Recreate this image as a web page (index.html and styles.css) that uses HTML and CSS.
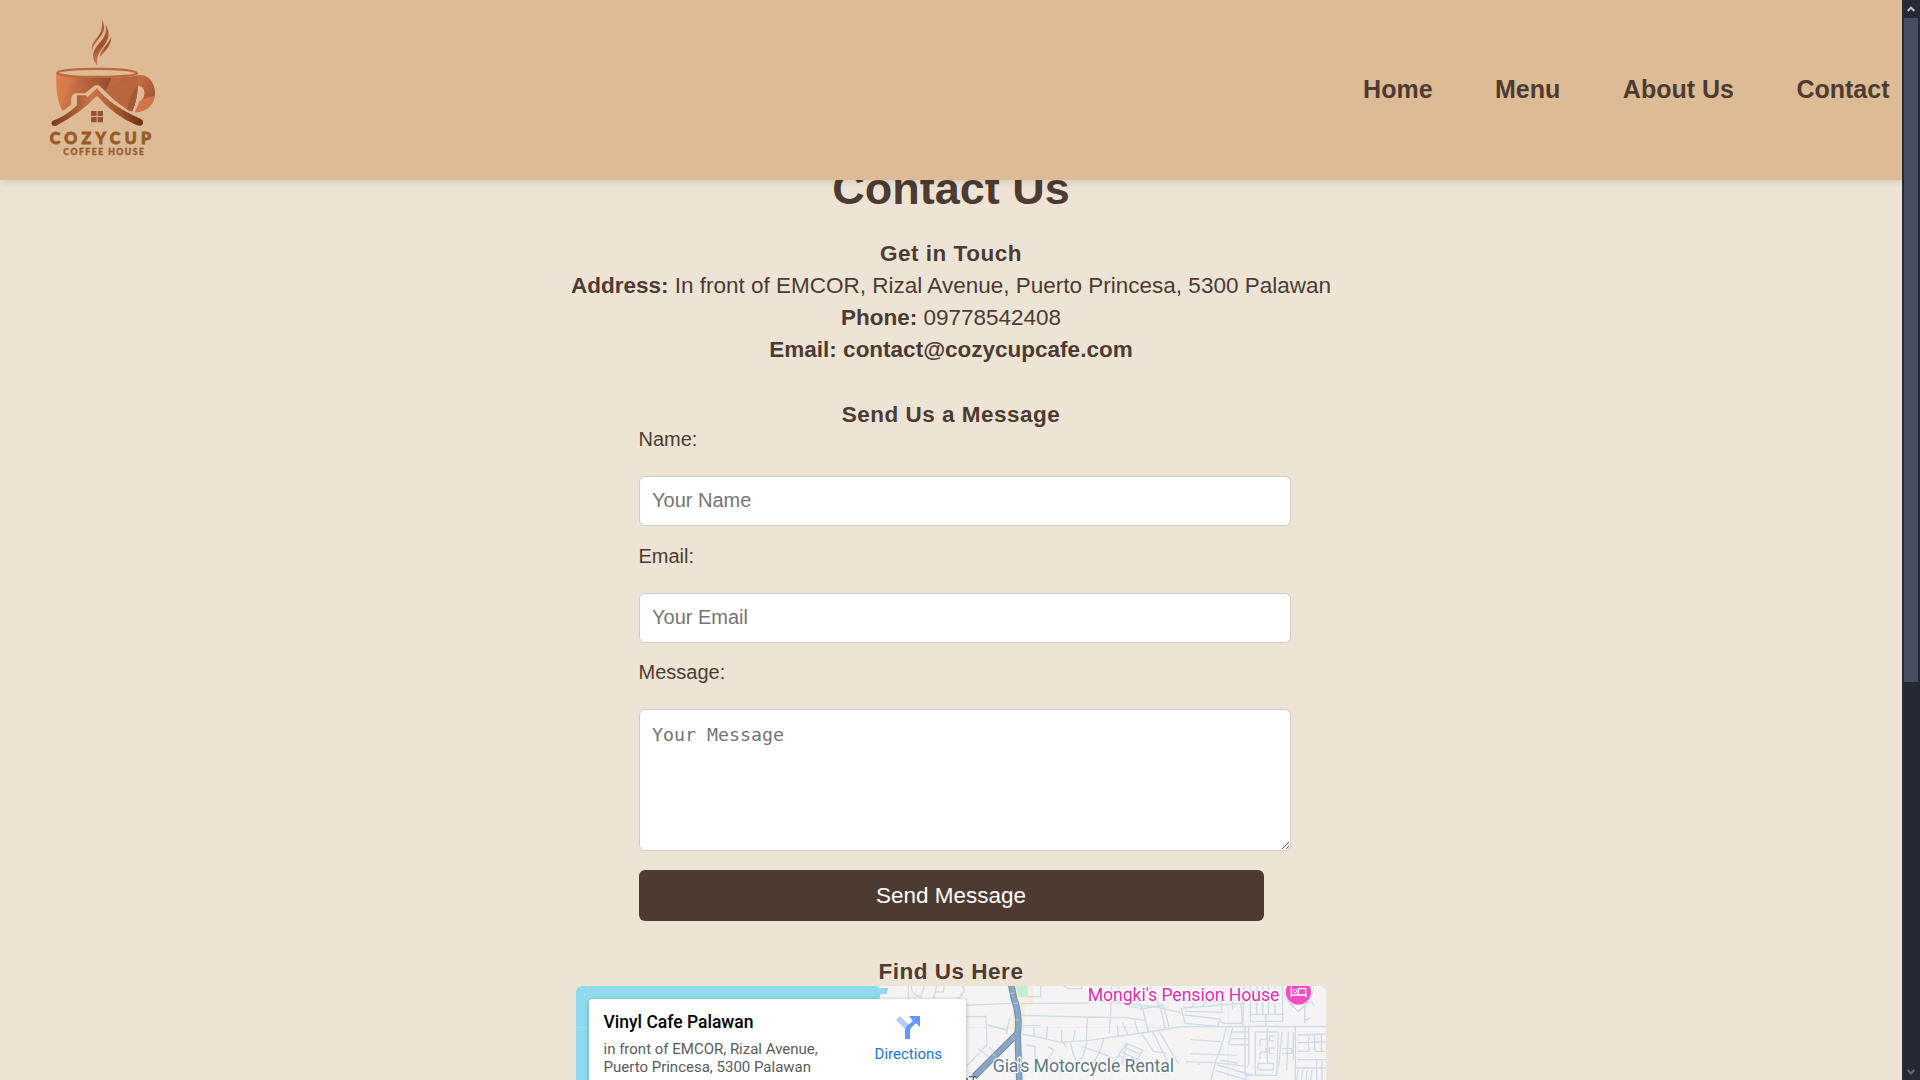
FILE: index.html
```html
<!DOCTYPE html>
<html lang="en">
<head>
<meta charset="utf-8">
<title>Cozy Cup - Contact Us</title>
<link rel="stylesheet" href="styles.css">
</head>
<body>
<div class="window">
  <div class="page">
    <header class="header">
      <svg class="logo" width="150" height="160" viewBox="0 0 450 480" role="img" aria-label="Cozycup Coffee House">
        <defs>
          <linearGradient id="steam" x1="0" y1="0" x2="0" y2="1">
            <stop offset="0" stop-color="#b9673e"/><stop offset=".5" stop-color="#9c5230"/><stop offset="1" stop-color="#cf7a4c"/>
          </linearGradient>
          <linearGradient id="left" x1="0" y1="0" x2="1" y2=".5">
            <stop offset="0" stop-color="#dc814f"/><stop offset=".5" stop-color="#d87b4a"/><stop offset="1" stop-color="#a9603c"/>
          </linearGradient>
          <linearGradient id="band" x1="0" y1=".2" x2="1" y2="0">
            <stop offset="0" stop-color="#d0744a"/><stop offset="1" stop-color="#8b4a2b"/>
          </linearGradient>
          <linearGradient id="handle" x1="0" y1="0" x2="1" y2="1">
            <stop offset="0" stop-color="#cc7144"/><stop offset="1" stop-color="#95502f"/>
          </linearGradient>
          <linearGradient id="roof" x1="0" y1="0" x2="1" y2="0">
            <stop offset="0" stop-color="#78391b"/><stop offset=".45" stop-color="#cc7447"/><stop offset=".7" stop-color="#a5572f"/><stop offset="1" stop-color="#6c3214"/>
          </linearGradient>
          <clipPath id="bowl"><path d="M79 187 C83 205 313 207 323 194 C325 235 321 272 307 304 H99 C82 280 77 238 79 187Z"/></clipPath>
        </defs>
        <g fill="url(#steam)">
          <path d="M215 27 C231 58 217 71 205 88 C194 103 186 113 187 125 C178 98 206 86 213 64 C217 51 217 39 215 27Z"/>
          <path d="M226 42 C243 69 236 88 222 107 C206 129 197 141 203 168 C182 145 187 124 204 104 C221 84 232 70 226 42Z"/>
          <path d="M244 77 C237 103 211 117 208 142 C223 126 245 108 244 77Z"/>
        </g>
        <path fill="url(#handle)" d="M323 196 C352 190 374 216 375 246 C376 282 348 306 315 307 C322 296 326 287 327 277 C340 270 344 256 343 245 C342 234 335 228 324 227Z"/>
        <path fill="#d0744a" d="M374 259 C354 259 336 268 326 278 L315 307 C347 306 370 289 374 259Z"/>
        <g clip-path="url(#bowl)">
          <path fill="url(#left)" d="M70 180H160V310H70Z"/>
          <path fill="url(#band)" d="M145 195 Q142 232 111 292 L145 310 H230 V260 Q264 224 247 195Z"/>
          <path fill="url(#handle)" d="M247 195 Q237 231 215 260 L270 310 H330 V195Z"/>
          <path fill="#b9673e" d="M330 197 Q267 215 239 256 L289 310 H330Z"/>
          <path fill="#a2583a" d="M324 225 Q296 258 289 310 H330Z"/>
        </g>
        <path fill="none" stroke="#bb673c" stroke-width="7" d="M82 188 C84 174 313 171 321 190 C316 203 87 207 82 188Z"/>
        <path fill="none" stroke="#ddbb95" stroke-width="31" stroke-linejoin="round" d="M69 337 Q104 321 139 292 V265 H171 L201 241 L238 278 Q279 313 338 343"/>
        <path fill="#ddbb95" d="M201 258 L116 330 V350 H300Z"/>
        <path fill="url(#roof)" d="M67 333 Q109 318 141 286 V256 H167 L173 261 L201 235 Q244 289 333 327 Q343 334 337 344 Q331 350 319 345 Q251 316 201 257 Q151 310 78 347 Q66 350 64 340Z"/>
        <path fill="#955330" d="M183 303H200V318H183ZM203 303H219V318H203ZM183 321H200V337H183ZM203 321H219V337H203Z"/>
        <text class="logo-name" x="59" y="401" textLength="304">COZYCUP</text>
        <text class="logo-tag" x="100" y="436" textLength="242">COFFEE HOUSE</text>
      </svg>
      <nav class="nav">
        <a>Home</a><a>Menu</a><a>About Us</a><a>Contact</a>
      </nav>
    </header>

    <main class="main">
      <h1 class="title">Contact Us</h1>
      <section class="touch">
        <h2 class="heading">Get in Touch</h2>
        <div class="details">
          <p><b>Address:</b> In front of EMCOR, Rizal Avenue, Puerto Princesa, 5300 Palawan</p>
          <p><b>Phone:</b> 09778542408</p>
          <p><b>Email: contact@cozycupcafe.com</b></p>
        </div>
      </section>
      <section class="message">
        <h2 class="heading">Send Us a Message</h2>
        <form class="form">
          <label for="name">Name:</label>
          <input id="name" type="text" placeholder="Your Name">
          <label for="email">Email:</label>
          <input id="email" type="email" placeholder="Your Email">
          <label for="msg">Message:</label>
          <textarea id="msg" placeholder="Your Message"></textarea>
          <button type="button">Send Message</button>
        </form>
      </section>
      <section class="find">
        <h2 class="heading">Find Us Here</h2>
        <div class="map">
          <svg class="map-canvas" width="750" height="94" viewBox="0 0 750 94">
            <g transform="translate(-6 -26) scale(.33333)">
              <path fill="#90daee" d="M0 78H922L928 84H955L950 102H932L927 120H0Z"/><path fill="#90daee" d="M0 100H80V360H0Z"/>
              <path stroke="#a6e2f1" stroke-width="2" d="M55 78V360M0 202H60"/>
              <g fill="none" stroke="#cfdce7" stroke-width="4"><path d="M1015 78V120M1025 78Q1020 100 1050 110M1063 78L1050 118M1100 78L1090 118M1095 96H1120L1122 78M1180 78Q1190 100 1160 118"/></g>
            </g>
            <g transform="translate(384 -26) scale(.33333)">
              <path fill="#f6edda" d="M140 78H222V128H195L192 215H154L158 130Z"/>
              <path fill="#c3edd4" d="M169 78H203V111H176Z"/>
              <path fill="none" stroke="#e5e5e9" stroke-width="2" d="M0 202H1100M805 78V360"/>
              <g fill="none" stroke="#cfdce7" stroke-width="4">
                <path d="M0 106Q20 94 7 78M12 136L154 130M184 131L380 129L405 120L595 142L662 158M203 110H242V78M310 78L325 86H365V78M455 78V103L448 220M477 78L468 108M503 98L500 138L548 146L530 118M548 146L565 216M540 148L610 135L628 205M570 78L603 150L616 208M186 166L380 171L500 173L555 182M382 170L379 242M18 170L78 169L81 254L15 323M83 195L140 210M150 173L139 222M87 261L106 280M55 265L85 290M187 197H242M186 222L225 229L300 247L382 242L565 216L665 200L1100 199M222 203V229M262 199L259 238M305 210V247M345 210L340 243M472 195L475 228M488 187L503 224M524 181L535 220M198 255L225 260V290M265 261Q290 270 272 286L247 322M318 260L310 247M331 249L348 307M382 243L369 289L349 310M365 260L410 274L460 295M432 235L418 278L400 309M395 270L445 288M565 216L545 220L580 274L622 280M577 214L630 318M595 210L656 312M460 308L500 250L548 270L523 318M490 260L540 283M482 274L532 298M474 286L525 311M502 250L485 313"/>
                <path d="M663 143L675 190L773 199L780 177L673 165M668 144L843 130M675 154L790 157M695 143L710 110M738 110L730 137M785 120V155M700 125H790M782 182Q785 190 800 190H845M818 78V150M840 99L846 160V189M853 78L848 198M871 78V184H968V78M871 163H968M918 165V198M890 78V163M908 78V163M925 78V163M945 78V163M855 198V345H915M1034 125V190M1034 130L1055 125L1062 137M1034 180L1052 174"/>
                <path d="M798 202L790 240L768 301L753 360M818 202L806 253L865 255M818 216H864M811 236H864M866 202V315M692 239L784 245M692 281L830 286M675 305L765 308L865 320M780 300L832 310M773 315L865 342L855 360M768 332L862 360M717 305V315"/>
                <path d="M886 216H955L950 346H886ZM922 204V310M900 238H918V228M900 258V238M945 228H928V242H942M900 276H918V264M900 296V276M945 264H928V280H942M894 310H940V330H894ZM966 216L956 320M985 216L980 330M1000 216V300M966 266H995V280H966M1006 199V360M1012 225L1100 222M1012 248L1100 246M1012 274H1046V225M1064 274H1100M1064 225V274M1084 225V274M1006 324H1100M1012 299H1100M1015 330L1010 360M1028 330L1024 360M1042 330L1038 360M1056 330L1052 360M1070 300V360M1086 300V360"/>
              </g>
              <g fill="none" stroke="#7191b1" stroke-width="20"><path d="M154 76L162 116Q180 160 173 224L178 364"/><path d="M173 220L42 350"/></g>
              <g fill="none" stroke="#89a6c4" stroke-width="14"><path d="M154 76L162 116Q180 160 173 224L178 364"/><path d="M173 220L42 350"/></g>
              <path fill="none" stroke="#d3dfeb" stroke-width="2" d="M151 101L163 98M160 131L174 128M165 180H179M155 230L166 241M91 278L109 290"/>
              <path fill="#fff" d="M190 360Q203 350 218 360Z"/>
              <path fill="none" stroke="#56616c" stroke-width="4" d="M27 350H50M40 350V360M18 357H24"/>
              <path fill="#bfc4c9" d="M971 82Q970 116 1000 142L1015 156L1030 142Q1062 116 1061 82Z"/>
              <path fill="#fff" d="M972 78Q969 112 1000 138L1015 152L1030 138Q1062 112 1059 78Z"/>
              <circle cx="1015" cy="96" r="38" fill="#f94bc6"/>
              <path fill="none" stroke="#fff" stroke-width="4" d="M994 80V112M994 105H1038V112M1015 103V86H1037V106"/>
              <circle cx="1005" cy="93" r="5" fill="none" stroke="#fff" stroke-width="3"/>
              <text class="poi poi-stay" x="383" y="122" textLength="575">Mongki's Pension House</text>
              <text class="poi poi-shop" x="98" y="336" textLength="544">Gia's Motorcycle Rental</text>
            </g>
          </svg>
          <div class="place">
            <div class="place-text">
              <strong>Vinyl Cafe Palawan</strong>
              <span>in front of EMCOR, Rizal Avenue,<br>Puerto Princesa, 5300 Palawan</span>
            </div>
            <div class="directions">
              <svg width="24" height="23" viewBox="0 0 24 23"><path fill="#b5cdfd" d="M0 4L4 0L14 10L10 14Z"/><path fill="#6598fb" d="M9 23V15Q9 12 11 10L17 5L13 0H24V11L20 7L15 12Q14 13 14 16V23Z"/></svg>
              <span>Directions</span>
            </div>
          </div>
        </div>
      </section>
    </main>
  </div>
  <div class="scrollbar">
    <svg width="8" height="6" viewBox="0 0 8 6"><path fill="none" stroke="#c5c5c8" stroke-width="2" d="M.7 5L4 1.6L7.3 5"/></svg>
    <div class="thumb"></div>
    <svg class="down" width="8" height="6" viewBox="0 0 8 6"><path fill="none" stroke="#6c6d70" stroke-width="2" d="M.7 1L4 4.4L7.3 1"/></svg>
  </div>
</div>
</body>
</html>
```
FILE: styles.css
```css
* { box-sizing: border-box; }
body {
  margin: 0;
  overflow: hidden;
  background: #ede4d5;
  color: #4d3b32;
  font-family: "Liberation Sans", Arial, sans-serif;
  font-size: 22.5px;
}
h1, h2, p { margin: 0; }
.window { display: grid; grid-template-columns: 1fr 18px; height: 1080px; }
.page { overflow: hidden; }
.header {
  position: relative;
  z-index: 2;
  display: flex;
  align-items: flex-start;
  justify-content: space-between;
  height: 180px;
  padding: 10px 12.5px 0 30px;
  background: #ddbb95;
  box-shadow: 0 2px 8px rgba(0, 0, 0, .12);
}
.logo { display: block; }
.logo text { fill: #985a2a; stroke: #985a2a; font-family: Lato, sans-serif; font-weight: 900; }
.logo .logo-name { font-size: 48px; stroke-width: 2.5px; }
.logo .logo-tag { font-size: 26px; stroke-width: 1px; }
.nav { display: flex; gap: 62.5px; padding-top: 64px; font-size: 25px; line-height: 30px; font-weight: bold; }
.main { display: flex; flex-direction: column; align-items: center; text-align: center; }
.title { margin-top: -17px; font-size: 45px; line-height: 52px; }
.heading { font-size: 22.5px; line-height: 26px; letter-spacing: .5px; }
.touch { margin-top: 26px; }
.details { padding-top: 3px; line-height: 32px; }
.message { width: 625px; margin-top: 36px; }
.form { display: flex; flex-direction: column; margin-top: -1px; text-align: left; }
.form label { font-size: 20px; line-height: 24px; margin-bottom: 25px; }
.form input, .form textarea {
  width: 652px;
  height: 50px;
  margin: 0 0 18px;
  padding: 0 12.5px 2px;
  border: 1px solid #ccc;
  border-radius: 6px;
  background: #fff;
  font: 20px "Liberation Sans", Arial, sans-serif;
}
.form input + label + input { margin-bottom: 17px; }
.form textarea {
  height: 142px;
  margin-bottom: 19px;
  padding-top: 14px;
  font: 18.27px/22px "DejaVu Sans Mono", monospace;
}
.form ::placeholder { color: #757575; }
.form button {
  height: 51px;
  padding: 0;
  border: 0;
  border-radius: 6px;
  background: #4d3b32;
  color: #fff;
  font: 22.5px "Liberation Sans", Arial, sans-serif;
}
.find { width: 750px; margin-top: 38px; }
.map {
  position: relative;
  height: 94px;
  margin-top: 1px;
  overflow: hidden;
  border-radius: 6px 6px 0 0;
  background: #f5f3f4;
  font-family: Roboto, sans-serif;
}
.map-canvas { display: block; }
.poi { font-family: Roboto, sans-serif; font-size: 53px; paint-order: stroke; stroke: #fff; stroke-width: 7px; stroke-linejoin: round; }
.poi-stay { fill: #e52bb4; }
.poi-shop { fill: #5c7784; }
/* Place card floating over the map */
.place {
  position: absolute;
  left: 13px;
  top: 13px;
  display: flex;
  justify-content: space-between;
  width: 377px;
  height: 100px;
  padding: 13px 24px 0 14.5px;
  border-radius: 3px;
  background: #fff;
  box-shadow: 0 1px 4px rgba(0, 0, 0, .3);
  text-align: left;
}
.place-text { display: flex; flex-direction: column; gap: 8px; }
.place-text strong { color: #000; font-size: 17.5px; line-height: 20px; font-weight: 500; }
.place-text span { color: #5b5b5b; font-size: 15px; line-height: 18px; }
.directions { display: flex; flex-direction: column; align-items: center; gap: 6px; padding-top: 4px; color: #1a73e8; font-size: 15px; line-height: 18px; }
.scrollbar { display: flex; flex-direction: column; align-items: center; padding: 6px 0 5px; background: #252934; }
.thumb { width: 14px; height: 664px; margin-top: 6px; background: #494d64; }
.down { margin-top: auto; }
```
